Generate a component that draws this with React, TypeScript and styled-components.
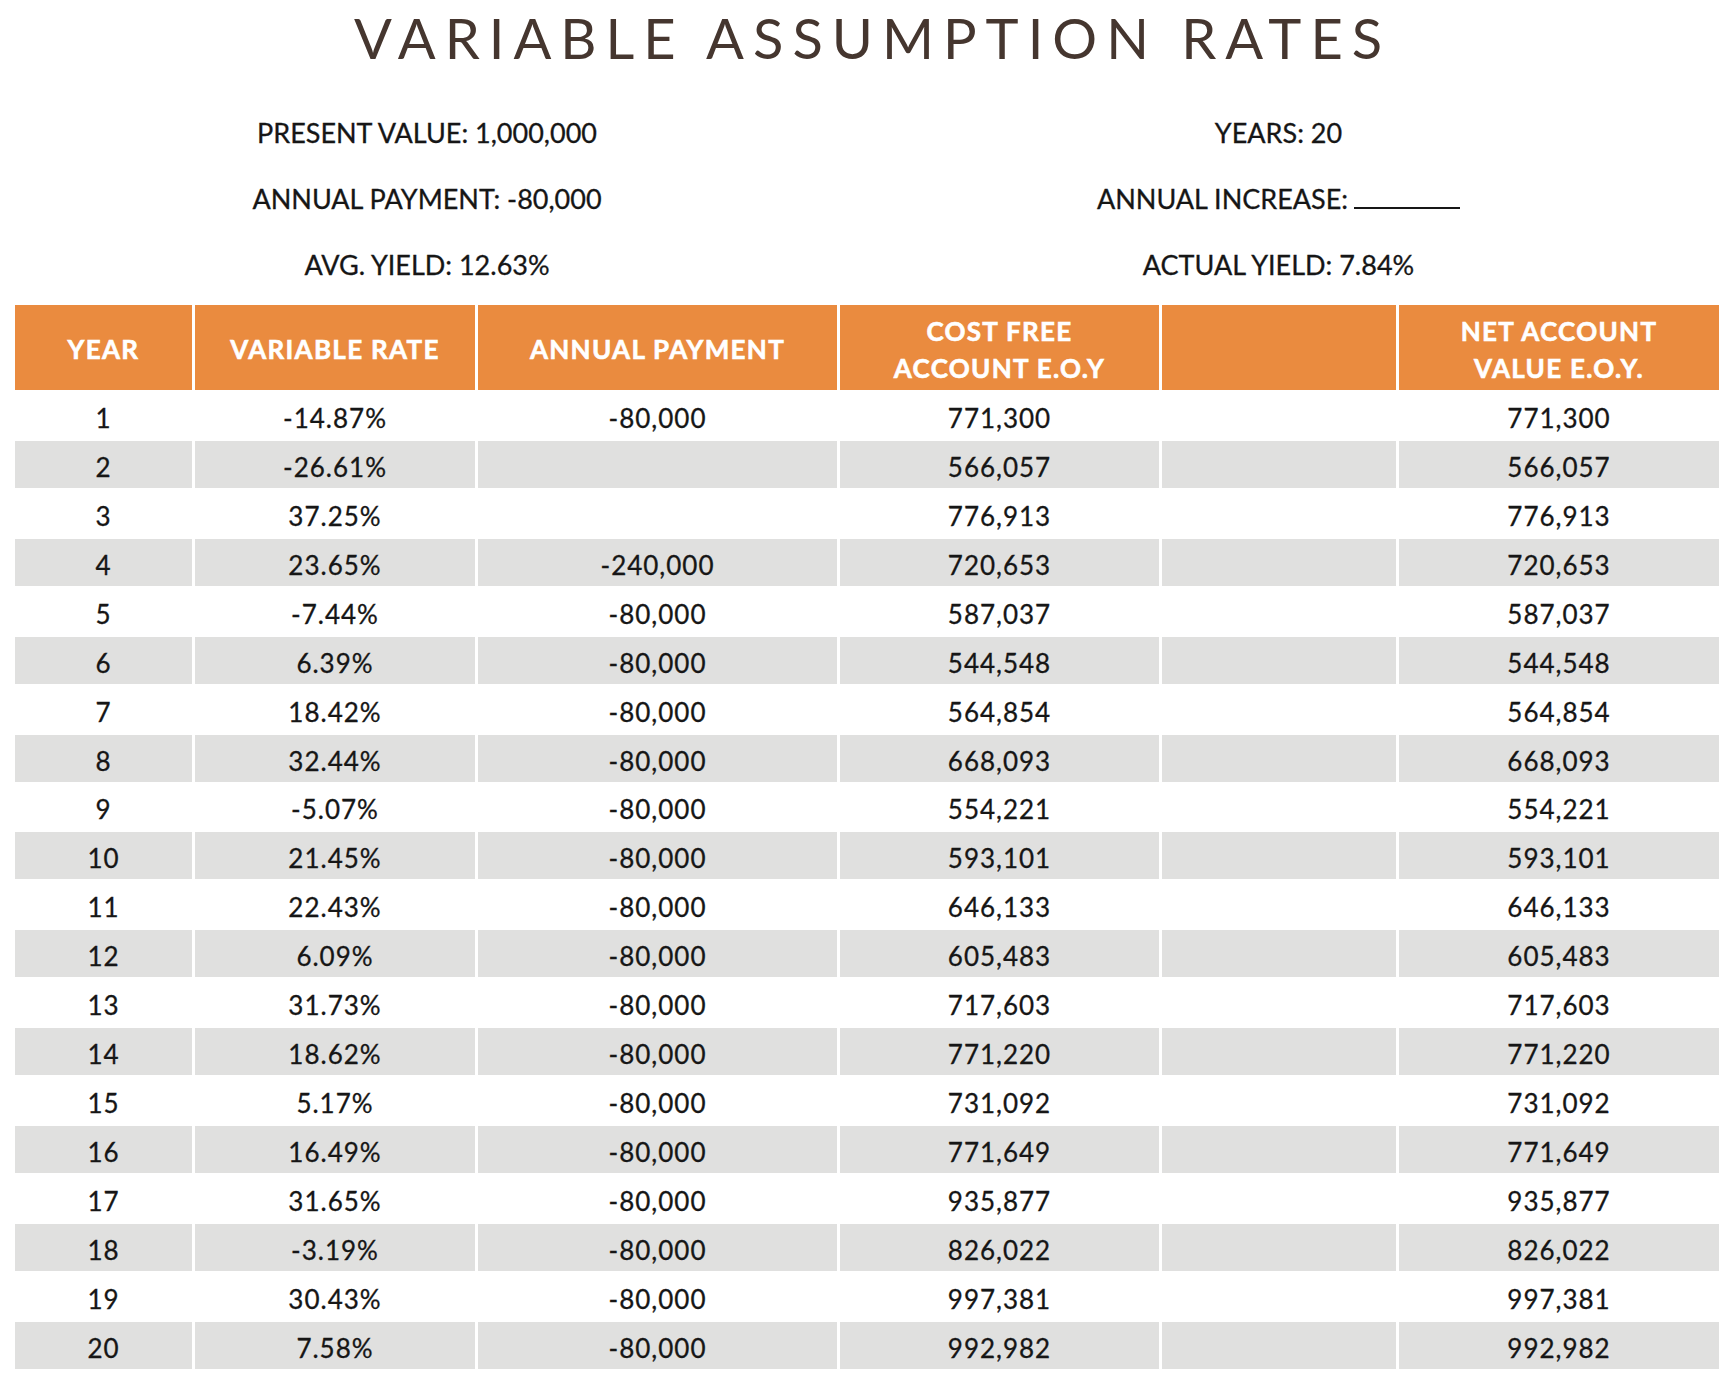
import React from "react";
import styled, { createGlobalStyle } from "styled-components";

const GlobalStyle = createGlobalStyle`
  html, body {
    margin: 0;
    padding: 0;
    background: #ffffff;
  }
  body {
    font-family: "Lato", "Open Sans", sans-serif;
    color: #1c1c1c;
  }
`;

const Page = styled.div`
  width: 1736px;
  padding: 6px 15px 0 15px;
  box-sizing: border-box;
`;

const Title = styled.h1`
  margin: 0;
  padding-left: 9px;
  text-align: center;
  font-family: "Lato", sans-serif;
  font-weight: 400;
  font-size: 56px;
  line-height: 64px;
  letter-spacing: 9px;
  color: #45362f;
`;

const InfoGrid = styled.div`
  display: grid;
  grid-template-columns: 824px 879px;
  margin-top: 30px;
`;

const InfoColumn = styled.div`
  display: flex;
  flex-direction: column;
  align-items: center;
`;

const InfoLine = styled.div`
  font-size: 27px;
  line-height: 66px;
  color: #161616;
  white-space: nowrap;
  -webkit-text-stroke: 0.3px #161616;
`;

const Blank = styled.span`
  display: inline-block;
  width: 106px;
  height: 2px;
  margin-left: 6px;
  background: #161616;
  vertical-align: baseline;
`;

const Table = styled.div`
  display: grid;
  grid-template-columns: 177px 280px 359px 319px 234px 320px;
  grid-template-rows: 85px;
  grid-auto-rows: 46.95px;
  column-gap: 3px;
  row-gap: 2px;
  margin-top: 7px;
`;

const HeaderCell = styled.div`
  background: #ea8b3f;
  color: #ffffff;
  font-weight: 700;
  font-size: 26px;
  letter-spacing: 1.3px;
  -webkit-text-stroke: 0.6px #ffffff;
  line-height: 37px;
  text-align: center;
  display: flex;
  align-items: center;
  justify-content: center;
  padding-top: 4px;
  box-sizing: border-box;
`;

const Cell = styled.div<{ $shade: boolean }>`
  background: ${(p) => (p.$shade ? "#e0e0df" : "#ffffff")};
  font-size: 26px;
  letter-spacing: 1px;
  color: #161616;
  -webkit-text-stroke: 0.3px #161616;
  display: flex;
  align-items: center;
  justify-content: center;
  padding-top: 5px;
  box-sizing: border-box;
`;

type Row = [string, string, string, string, string, string];

const rows: Row[] = [
  ["1", "-14.87%", "-80,000", "771,300", "", "771,300"],
  ["2", "-26.61%", "", "566,057", "", "566,057"],
  ["3", "37.25%", "", "776,913", "", "776,913"],
  ["4", "23.65%", "-240,000", "720,653", "", "720,653"],
  ["5", "-7.44%", "-80,000", "587,037", "", "587,037"],
  ["6", "6.39%", "-80,000", "544,548", "", "544,548"],
  ["7", "18.42%", "-80,000", "564,854", "", "564,854"],
  ["8", "32.44%", "-80,000", "668,093", "", "668,093"],
  ["9", "-5.07%", "-80,000", "554,221", "", "554,221"],
  ["10", "21.45%", "-80,000", "593,101", "", "593,101"],
  ["11", "22.43%", "-80,000", "646,133", "", "646,133"],
  ["12", "6.09%", "-80,000", "605,483", "", "605,483"],
  ["13", "31.73%", "-80,000", "717,603", "", "717,603"],
  ["14", "18.62%", "-80,000", "771,220", "", "771,220"],
  ["15", "5.17%", "-80,000", "731,092", "", "731,092"],
  ["16", "16.49%", "-80,000", "771,649", "", "771,649"],
  ["17", "31.65%", "-80,000", "935,877", "", "935,877"],
  ["18", "-3.19%", "-80,000", "826,022", "", "826,022"],
  ["19", "30.43%", "-80,000", "997,381", "", "997,381"],
  ["20", "7.58%", "-80,000", "992,982", "", "992,982"],
];

const headers: React.ReactNode[] = [
  "YEAR",
  "VARIABLE RATE",
  "ANNUAL PAYMENT",
  <>COST FREE<br />ACCOUNT E.O.Y</>,
  "",
  <>NET ACCOUNT<br />VALUE E.O.Y.</>,
];

export default function App() {
  return (
    <>
      <GlobalStyle />
      <Page>
        <Title>VARIABLE ASSUMPTION RATES</Title>
        <InfoGrid>
          <InfoColumn>
            <InfoLine>PRESENT VALUE: 1,000,000</InfoLine>
            <InfoLine>ANNUAL PAYMENT: -80,000</InfoLine>
            <InfoLine>AVG. YIELD: 12.63%</InfoLine>
          </InfoColumn>
          <InfoColumn>
            <InfoLine>YEARS: 20</InfoLine>
            <InfoLine>
              ANNUAL INCREASE:
              <Blank aria-label="blank" />
            </InfoLine>
            <InfoLine>ACTUAL YIELD: 7.84%</InfoLine>
          </InfoColumn>
        </InfoGrid>
        <Table>
          {headers.map((h, i) => (
            <HeaderCell key={`h${i}`}>{h}</HeaderCell>
          ))}
          {rows.map((r, ri) =>
            r.map((v, ci) => (
              <Cell key={`${ri}-${ci}`} $shade={ri % 2 === 1}>
                {v}
              </Cell>
            ))
          )}
        </Table>
      </Page>
    </>
  );
}
